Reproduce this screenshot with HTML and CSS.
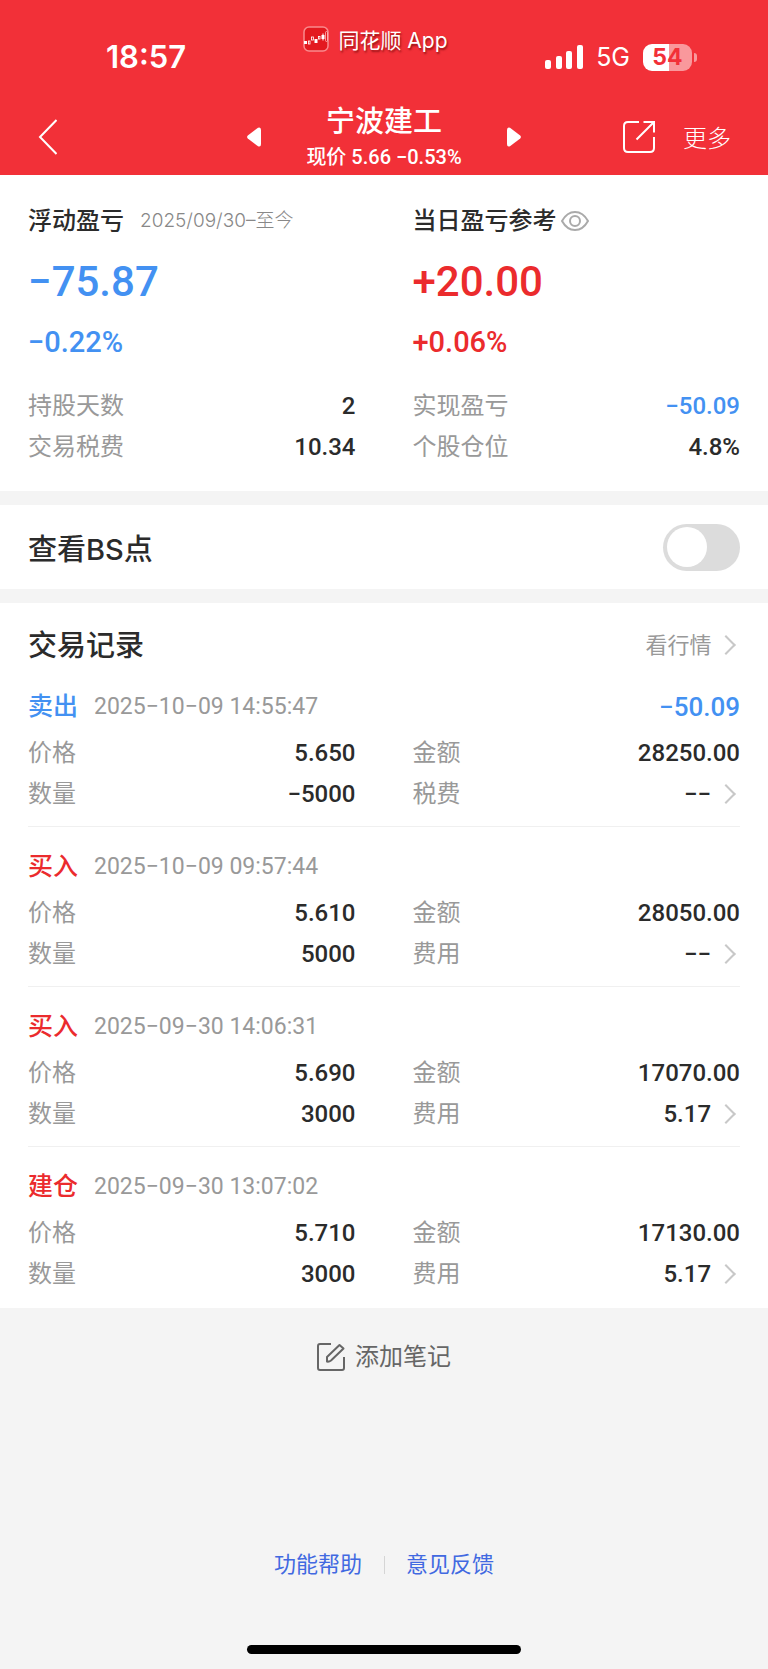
FILE: index.html
```html
<!DOCTYPE html>
<html lang="zh-CN">
<head>
    <meta charset="UTF-8">
    <meta name="viewport" content="width=device-width, initial-scale=1.0">
    <title>宁波建工</title>
    <link rel="stylesheet" href="styles.css">
</head>
<body>
    <header class="header">
        <div class="status-bar">
            <span class="time">18:57</span>
            <div class="app-name">
                <svg width="26" height="26" viewBox="0 0 26 26" fill="none">
                    <rect x="1" y="1" width="24" height="24" rx="5" fill="#e3191f" stroke="#f98a8d" stroke-width="1.5"/>
                    <rect x="1" y="15" width="3" height="3" fill="#fff"/>
                    <rect x="5.500" y="15" width="1.500" height="3" stroke="#fff" stroke-width=".8"/>
                    <rect x="8.500" y="11" width="2" height="3" stroke="#fff" stroke-width=".8"/>
                    <rect x="11.500" y="13" width="3" height="4" fill="#fff"/>
                    <rect x="15.500" y="10.500" width="1.500" height="2.500" stroke="#fff" stroke-width=".8"/>
                    <path d="M20 7.500v7" stroke="#fff"/>
                    <rect x="18.500" y="9" width="3" height="4" fill="#fff"/>
                    <rect x="22.500" y="5.500" width="2" height="10" rx="1" stroke="#fbb" stroke-width=".8"/>
                </svg>
                <span>同花顺 App</span>
            </div>
            <div class="status-icons">
                <svg width="38" height="25" viewBox="0 0 38 25" fill="#fff">
                    <rect x="0" y="15" width="6" height="9" rx="2"/>
                    <rect x="11" y="11" width="6" height="13" rx="2"/>
                    <rect x="21" y="6" width="6" height="18" rx="2"/>
                    <rect x="32" y="0" width="6" height="24" rx="2"/>
                </svg>
                <span class="network">5G</span>
                <div class="battery"><span class="level">54</span><i class="tip"></i></div>
            </div>
        </div>
        <nav class="nav">
            <a href="#" class="back" aria-label="返回">
                <svg width="20" height="36" viewBox="0 0 20 36" fill="none" stroke="#fff" stroke-width="2">
                    <path d="M19.500 1L3 18l16.500 17"/>
                </svg>
            </a>
            <div class="stock">
                <button class="arrow" aria-label="上一只">
                    <svg width="14" height="20" viewBox="0 0 14 20" fill="#fff">
                        <path d="M11 .7L.8 8.600Q-.6 10 .8 11.400L11 19.300Q14 20.500 14 17V3Q14-.5 11 .7z"/>
                    </svg>
                </button>
                <div class="stock-info">
                    <h1>宁波建工</h1>
                    <p>现价 5.66 −0.53%</p>
                </div>
                <button class="arrow" aria-label="下一只">
                    <svg width="14" height="20" viewBox="0 0 14 20" fill="#fff">
                        <path d="M3 .7L13.200 8.600Q14.600 10 13.200 11.400L3 19.300Q0 20.500 0 17V3Q0-.5 3 .7z"/>
                    </svg>
                </button>
            </div>
            <div class="nav-actions">
                <button aria-label="分享">
                    <svg width="32" height="32" viewBox="0 0 32 32" fill="none" stroke="#fff" stroke-width="2">
                        <path d="M16 1H5Q1 1 1 5v22q0 4 4 4h22q4 0 4-4V16"/>
                        <path d="M20.500 1H31v10.500M30.500 1.500L13.500 18.500"/>
                    </svg>
                </button>
                <button class="menu">更多</button>
            </div>
        </nav>
    </header>

    <main>
        <section class="summary">
            <div>
                <h2>浮动盈亏 <small>2025/09/30–至今</small></h2>
                <p class="amount blue">−75.87</p>
                <p class="percent blue">−0.22%</p>
                <dl class="rows">
                    <div><dt>持股天数</dt><dd>2</dd></div>
                    <div><dt>交易税费</dt><dd>10.34</dd></div>
                </dl>
            </div>
            <div>
                <h2>当日盈亏参考
                    <svg width="28" height="20" viewBox="0 0 28 20" fill="none" stroke="#aaa" stroke-width="2">
                        <path d="M1 10Q6 1 14 1t13 9q-5 9-13 9T1 10z"/>
                        <circle cx="14" cy="10" r="5"/>
                    </svg>
                </h2>
                <p class="amount red">+20.00</p>
                <p class="percent red">+0.06%</p>
                <dl class="rows">
                    <div><dt>实现盈亏</dt><dd class="blue">−50.09</dd></div>
                    <div><dt>个股仓位</dt><dd>4.8%</dd></div>
                </dl>
            </div>
        </section>

        <section class="bs-point">
            <label for="bs-switch">查看BS点</label>
            <input type="checkbox" id="bs-switch" class="switch">
        </section>

        <section class="records">
            <div class="records-header">
                <h2>交易记录</h2>
                <a href="#">看行情 <i class="more"></i></a>
            </div>

            <article class="record">
                <h3><span class="blue">卖出</span> <time>2025−10−09 14:55:47</time> <b class="blue">−50.09</b></h3>
                <dl class="rows two-columns">
                    <div><dt>价格</dt><dd>5.650</dd></div>
                    <div><dt>金额</dt><dd>28250.00</dd></div>
                    <div><dt>数量</dt><dd>−5000</dd></div>
                    <div><dt>税费</dt><dd>−− <i class="more"></i></dd></div>
                </dl>
            </article>

            <article class="record">
                <h3><span class="red">买入</span> <time>2025−10−09 09:57:44</time></h3>
                <dl class="rows two-columns">
                    <div><dt>价格</dt><dd>5.610</dd></div>
                    <div><dt>金额</dt><dd>28050.00</dd></div>
                    <div><dt>数量</dt><dd>5000</dd></div>
                    <div><dt>费用</dt><dd>−− <i class="more"></i></dd></div>
                </dl>
            </article>

            <article class="record">
                <h3><span class="red">买入</span> <time>2025−09−30 14:06:31</time></h3>
                <dl class="rows two-columns">
                    <div><dt>价格</dt><dd>5.690</dd></div>
                    <div><dt>金额</dt><dd>17070.00</dd></div>
                    <div><dt>数量</dt><dd>3000</dd></div>
                    <div><dt>费用</dt><dd>5.17 <i class="more"></i></dd></div>
                </dl>
            </article>

            <article class="record">
                <h3><span class="red">建仓</span> <time>2025−09−30 13:07:02</time></h3>
                <dl class="rows two-columns">
                    <div><dt>价格</dt><dd>5.710</dd></div>
                    <div><dt>金额</dt><dd>17130.00</dd></div>
                    <div><dt>数量</dt><dd>3000</dd></div>
                    <div><dt>费用</dt><dd>5.17 <i class="more"></i></dd></div>
                </dl>
            </article>
        </section>

        <button class="add-note">
            <svg width="28" height="28" viewBox="0 0 28 28" fill="none" stroke="#666" stroke-width="2">
                <path d="M14 1H3Q1 1 1 3v22q0 2 2 2h22q2 0 2-2V14"/>
                <path d="M10 18.500v-4.500L22.500 2 26.500 5.500 14 17.500Q12 19 10 18.500z" stroke-linejoin="round"/>
            </svg>
            添加笔记
        </button>
    </main>

    <footer class="footer">
        <div class="links">
            <a href="#">功能帮助</a>
            <a href="#">意见反馈</a>
        </div>
        <div class="home-bar"></div>
    </footer>
</body>
</html>
```

FILE: styles.css
```css
* {
    box-sizing: border-box;
    margin: 0;
    padding: 0;
}

body {
    font-family: Roboto, "Noto Sans CJK SC", sans-serif;
    font-size: 24px;
    color: #2b2b2b;
    background-color: #f4f4f4;
    min-height: 100vh;
    display: flex;
    flex-direction: column;
}

button {
    font: inherit;
    color: inherit;
    background: none;
    border: none;
    cursor: pointer;
}

a {
    text-decoration: none;
}

svg {
    display: block;
    flex-shrink: 0;
}

.blue {
    color: #4391f2;
}

.red {
    color: #eb2b2d;
}

/* Topo */
.header {
    background-color: #f23038;
    color: #fff;
}

.status-bar {
    display: grid;
    grid-template-columns: 1fr auto 1fr;
    font-family: Inter, "Noto Sans CJK SC", sans-serif;
    height: 98px;
    padding: 24px 71px 0 106px;
}

.time {
    font-size: 31px;
    font-weight: 600;
    line-height: 66px;
}

.app-name {
    display: flex;
    align-items: center;
    gap: 9px;
    height: 30px;
    margin-right: 52px;
    font-size: 21px;
    text-shadow: 1px 2px 2px rgba(90, 0, 0, 0.6);
}

.status-icons {
    display: flex;
    justify-content: flex-end;
    align-items: center;
    height: 66px;
}

.network {
    font-size: 25px;
    margin: 0 13px;
}

.battery {
    display: flex;
    align-items: center;
    gap: 2px;
}

.level {
    width: 49px;
    border-radius: 9px;
    background: linear-gradient(to right, #fff 54%, #f9989c 54%);
    color: #f23038;
    font-size: 23px;
    font-weight: 700;
    line-height: 27px;
    text-align: center;
}

.tip {
    width: 3px;
    height: 9px;
    border-radius: 0 4px 4px 0;
    background-color: #f9989c;
}

.nav {
    display: grid;
    grid-template-columns: 1fr auto 1fr;
    align-items: center;
    height: 77px;
    padding: 0 37px;
}

.stock {
    display: flex;
    align-items: center;
    gap: 45px;
}

.stock-info {
    text-align: center;
}

.stock-info h1 {
    font-size: 29px;
    font-weight: 500;
    line-height: 40px;
}

.stock-info p {
    font-size: 20px;
    font-weight: 500;
    line-height: 30px;
}

.nav-actions {
    display: flex;
    justify-content: flex-end;
    align-items: center;
    gap: 28px;
}

.menu {
    font-weight: 300;
}

/* Resumo */
.summary, .bs-point, .records {
    background-color: #fff;
    padding: 0 28px;
    margin-bottom: 14px;
}

.summary {
    display: grid;
    grid-template-columns: 1fr 1fr;
    column-gap: 57px;
    padding-top: 25px;
    padding-bottom: 23px;
}

.summary h2 {
    display: flex;
    align-items: center;
    gap: 4px;
    font-size: 24px;
    font-weight: 500;
    line-height: 42px;
}

.summary small {
    font-family: Inter, "Noto Sans CJK SC", sans-serif;
    font-size: 19px;
    font-weight: 300;
    color: #888;
    margin-left: 12px;
}

.amount {
    font-size: 42px;
    font-weight: 500;
    line-height: 80px;
}

.percent {
    font-size: 29px;
    font-weight: 500;
    line-height: 40px;
    margin-bottom: 24px;
}

.rows > div {
    display: flex;
    justify-content: space-between;
    line-height: 41px;
}

.rows dt {
    color: #999;
}

.rows dd {
    font-weight: 500;
}

.two-columns {
    display: grid;
    grid-template-columns: 1fr 1fr;
    column-gap: 57px;
}

/* Ponto BS */
.bs-point {
    display: flex;
    justify-content: space-between;
    align-items: center;
    height: 84px;
    font-family: Inter, "Noto Sans CJK SC", sans-serif;
    font-size: 29px;
    font-weight: 500;
}

.switch {
    appearance: none;
    width: 77px;
    height: 47px;
    border-radius: 24px;
    background-color: #dcdcdc;
    padding: 3px 4px;
    cursor: pointer;
}

.switch::before {
    content: "";
    display: block;
    width: 40px;
    height: 40px;
    border-radius: 50%;
    background-color: #fff;
}

.switch:checked {
    background-color: #eb2b2d;
}

.switch:checked::before {
    margin-left: auto;
}

/* Registros */
.records {
    margin-bottom: 0;
    padding-bottom: 2px;
}

.records-header {
    display: flex;
    justify-content: space-between;
    align-items: center;
    padding-top: 22px;
    line-height: 42px;
}

.records-header h2 {
    font-size: 29px;
    font-weight: 500;
}

.records-header a {
    color: #999;
    font-size: 22px;
}

.more {
    display: inline-block;
    width: 14px;
    height: 14px;
    border-top: 2px solid #c8c8c8;
    border-right: 2px solid #c8c8c8;
    transform: rotate(45deg);
    vertical-align: 1px;
    margin: 0 7px 0 2px;
}

.record {
    padding: 20px 0 11px;
    border-bottom: 1px solid #f0f0f0;
}

.record:last-child {
    border-bottom: none;
}

.record h3 {
    display: flex;
    align-items: center;
    gap: 16px;
    font-size: 25px;
    font-weight: 500;
    line-height: 40px;
    margin-bottom: 6px;
}

.record time {
    font-size: 23px;
    font-weight: 400;
    color: #999;
}

.record b {
    font-size: 26px;
    font-weight: 500;
    margin-left: auto;
}

.add-note {
    display: flex;
    align-items: center;
    gap: 10px;
    margin: 28px auto 0;
    line-height: 42px;
    color: #666;
}

/* Rodapé */
.footer {
    margin-top: auto;
    padding-bottom: 15px;
}

.links {
    display: flex;
    justify-content: center;
    margin-bottom: 64px;
}

.links a {
    color: #4169e1;
    font-size: 22px;
    line-height: 32px;
    padding: 0 22px;
}

.links a + a {
    background: linear-gradient(#d5d5d5, #d5d5d5) left center / 1px 18px no-repeat;
}

.home-bar {
    width: 274px;
    height: 9px;
    border-radius: 5px;
    background-color: #000;
    margin: 0 auto;
}
```
